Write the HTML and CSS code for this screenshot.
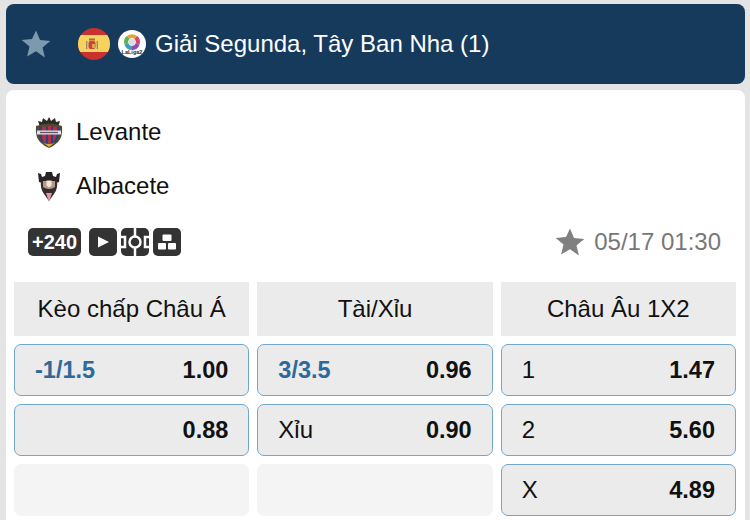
FILE: index.html
```html
<!DOCTYPE html>
<html lang="vi">
<head>
    <meta charset="UTF-8">
    <meta name="viewport" content="width=device-width, initial-scale=1.0">
    <title>Giải Segunda</title>
    <link rel="stylesheet" href="styles.css">
</head>
<body>
    <div class="league-bar">
        <svg class="league-star" viewBox="0 0 30 30"><path d="M15 1.5l4 9.6 10.3.8-7.8 6.7 2.4 10L15 22.2l-8.9 5.4 2.4-10-7.8-6.7 10.3-.8z"/></svg>
        <svg class="flag" viewBox="0 0 32 32">
            <clipPath id="flagClip"><circle cx="16" cy="16" r="16"/></clipPath>
            <g clip-path="url(#flagClip)">
                <rect width="32" height="32" fill="#c8312d"/>
                <rect y="7" width="32" height="17" fill="#f6d35f"/>
                <rect x="10.5" y="13" width="7" height="8" rx="2" fill="#c0493a"/>
                <rect x="14" y="16" width="3" height="4" fill="#e2a64a"/>
                <rect x="8" y="13" width="1.4" height="8" fill="#a9827a"/>
                <rect x="18.6" y="13" width="1.4" height="8" fill="#a9827a"/>
                <rect x="11" y="10.5" width="6" height="2" fill="#b8623a"/>
            </g>
        </svg>
        <svg class="league-logo" viewBox="0 0 28 28">
            <circle cx="14" cy="14" r="14" fill="#fff"/>
            <g fill="none" stroke-width="4">
                <path d="M10.2 7.5A6 6 0 0 1 17.8 7.5" stroke="#eda12f"/>
                <path d="M17.8 7.5A6 6 0 0 1 19.6 14" stroke="#dd3f6e"/>
                <path d="M19.6 14A6 6 0 0 1 14 18" stroke="#8a4fb0"/>
                <path d="M14 18A6 6 0 0 1 8.4 14" stroke="#3f9fb8"/>
                <path d="M8.4 14A6 6 0 0 1 10.2 7.5" stroke="#5fb356"/>
            </g>
            <circle cx="14" cy="12" r="3.2" fill="#d8dde2"/>
            <text x="14" y="24" text-anchor="middle" class="league-logo-text">LaLiga2</text>
        </svg>
        <span class="league-name">Giải Segunda, Tây Ban Nha (1)</span>
    </div>

    <div class="match-card">
        <div class="team-row">
            <svg class="crest" viewBox="0 0 30 32">
                <path d="M15 1l2 4 4-3 1 4 4-1-2 6H6L4 5l4 1 1-4 4 3z" fill="#2b2b25"/>
                <path d="M2 10q13-5 26 0 1 11-4 16-4 4-9 6-5-2-9-6Q1 21 2 10z" fill="#4a4a38"/>
                <path d="M5 11h20q.6 9-3 14l-7 5-7-5Q4.400 20 5 11z" fill="#2b3f86"/>
                <path d="M8 10.500h4v17l-3-2.500q-2-6-1-14.500zM14 10h3v19l-2 1-1-.8zM19 10.500h4q.5 8-2 13l-2 2.500z" fill="#b3303c"/>
                <path d="M3 14.500l24 0v4l-24 0z" fill="#e4e2e8"/>
                <path d="M6 15.800h18v1.400H6z" fill="#5b5870"/>
                <path d="M9 26.500q6 3 12 0l-6 4.500z" fill="#d9a93a"/>
            </svg>
            <span class="team-name">Levante</span>
        </div>
        <div class="team-row">
            <svg class="crest" viewBox="0 0 30 32">
                <path d="M4 3l3 1 1 3 3-1 1-4h6l1 4 3 1 1-3 3-1-1 9-3 1H8l-3-1z" fill="#2a2325"/>
                <path d="M7 11h16q1 8-3 13l-5 7-5-7Q6 19 7 11z" fill="#3a2b2e"/>
                <path d="M9 11h12v6q-6 4-12 0z" fill="#b59a84"/>
                <path d="M12.500 10.500h5v5l-2.500 2-2.500-2z" fill="#f0e6dc"/>
                <path d="M12 23l3 9 3-9z" fill="#d79aa2"/>
            </svg>
            <span class="team-name">Albacete</span>
        </div>

        <div class="meta-row">
            <div class="meta-icons">
                <span class="more-badge">+240</span>
                <span class="icon-btn"><svg viewBox="0 0 28 28"><path d="M9 8.500l11 5.500-11 5.500z" fill="#fff"/></svg></span>
                <span class="icon-btn"><svg viewBox="0 0 28 28" fill="none" stroke="#fff" stroke-width="2.500"><path d="M14 0v8M14 20v8"/><circle cx="14" cy="14" r="5.500"/><path d="M0 9h4v10H0M28 9h-4v10h4"/></svg></span>
                <span class="icon-btn"><svg viewBox="0 0 28 28" fill="#fff"><rect x="9.500" y="6.500" width="9" height="6.500" rx="1"/><rect x="5" y="15" width="8" height="6.500" rx="1"/><rect x="15" y="15" width="8" height="6.500" rx="1"/></svg></span>
            </div>
            <div class="kickoff">
                <svg class="kickoff-star" viewBox="0 0 30 30"><path d="M15 1.500l4 9.600 10.300.8-7.800 6.700 2.400 10L15 22.200l-8.900 5.400 2.400-10-7.800-6.700 10.300-.8z"/></svg>
                <span>05/17 01:30</span>
            </div>
        </div>

        <div class="odds-grid">
            <div class="odds-col">
                <div class="odds-head">Kèo chấp Châu Á</div>
                <div class="odds-cell"><span class="line">-1/1.5</span><b>1.00</b></div>
                <div class="odds-cell"><span></span><b>0.88</b></div>
                <div class="odds-cell empty"></div>
            </div>
            <div class="odds-col">
                <div class="odds-head">Tài/Xỉu</div>
                <div class="odds-cell"><span class="line">3/3.5</span><b>0.96</b></div>
                <div class="odds-cell"><span>Xỉu</span><b>0.90</b></div>
                <div class="odds-cell empty"></div>
            </div>
            <div class="odds-col">
                <div class="odds-head">Châu Âu 1X2</div>
                <div class="odds-cell"><span>1</span><b>1.47</b></div>
                <div class="odds-cell"><span>2</span><b>5.60</b></div>
                <div class="odds-cell"><span>X</span><b>4.89</b></div>
            </div>
        </div>
    </div>
</body>
</html>
```

FILE: styles.css
```css
* {
    margin: 0;
    padding: 0;
    box-sizing: border-box;
}

html, body {
    height: 520px;
    overflow: hidden;
}

body {
    font-family: "Liberation Sans", Arial, sans-serif;
    background: #e4e4e4;
    padding: 4px 5px 0 6px;
    color: #111;
}

.league-bar {
    height: 80px;
    background: #163a5c;
    border-radius: 8px;
    display: flex;
    align-items: center;
    padding-left: 15px;
    color: #fff;
}

.league-star {
    width: 30px;
    height: 30px;
    fill: #7d99ae;
    margin-right: 27px;
}

.flag {
    width: 32px;
    height: 32px;
    margin-right: 8px;
}

.league-logo {
    width: 28px;
    height: 28px;
    margin-right: 9px;
}

.league-logo-text {
    font-size: 5.500px;
    font-weight: bold;
    fill: #26282b;
}

.league-name {
    font-size: 24px;
}

.match-card {
    margin-top: 6px;
    height: 440px;
    background: #fff;
    border-radius: 8px 8px 0 0;
    padding: 15px 9px 0 8px;
}

.team-row {
    height: 54px;
    display: flex;
    align-items: center;
    padding-left: 20px;
}

.crest {
    width: 30px;
    height: 32px;
    margin-right: 12px;
}

.team-name {
    font-size: 24px;
}

.meta-row {
    display: flex;
    justify-content: space-between;
    align-items: center;
    height: 28px;
    margin-top: 15px;
    padding: 0 15px 0 14px;
}

.meta-icons {
    display: flex;
    gap: 4px;
}

.more-badge {
    height: 28px;
    line-height: 28px;
    padding: 0 4px;
    margin-right: 4px;
    background: #333;
    color: #fff;
    border-radius: 5px;
    font-size: 20px;
    font-weight: bold;
}

.icon-btn {
    width: 28px;
    height: 28px;
    background: #333;
    border-radius: 5px;
    overflow: hidden;
}

.icon-btn svg {
    display: block;
    width: 28px;
    height: 28px;
}

.kickoff {
    display: flex;
    align-items: center;
    gap: 9px;
    font-size: 24px;
    color: #777;
}

.kickoff-star {
    width: 30px;
    height: 30px;
    fill: #808080;
}

.odds-grid {
    display: grid;
    grid-template-columns: repeat(3, 1fr);
    gap: 8px;
    margin-top: 26px;
}

.odds-col {
    display: flex;
    flex-direction: column;
    gap: 8px;
}

.odds-head {
    height: 54px;
    background: #ebebeb;
    display: flex;
    align-items: center;
    justify-content: center;
    font-size: 24px;
}

.odds-cell {
    height: 52px;
    background: #ebebeb;
    border: 1px solid #6fa8cc;
    border-radius: 7px;
    display: flex;
    align-items: center;
    justify-content: space-between;
    padding: 0 20px;
    font-size: 24px;
}

.odds-cell b {
    font-size: 23.500px;
}

.odds-cell.empty {
    background: #f4f4f4;
    border-color: #f4f4f4;
}

.line {
    color: #2e6a99;
    font-weight: bold;
    font-size: 23.500px;
}
```
